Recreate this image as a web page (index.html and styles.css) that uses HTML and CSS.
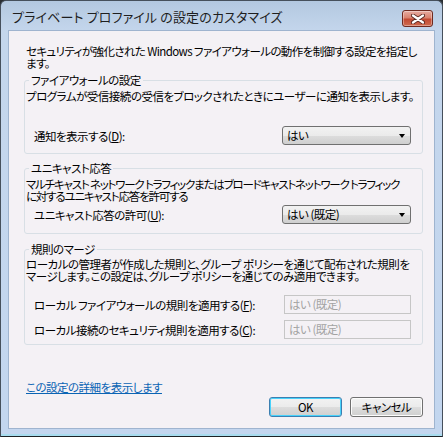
FILE: index.html
```html
<!DOCTYPE html>
<html lang="ja">
<head>
    <meta charset="UTF-8">
    <title>プライベート プロファイル の設定のカスタマイズ</title>
    <link rel="stylesheet" href="styles.css">
</head>
<body>

    <div class="window">
        <!-- Title bar -->
        <div class="titlebar">
            <span class="title">プライベート プロファイル の設定のカスタマイズ</span>
            <button class="close-btn" type="button" aria-label="閉じる">
                <svg width="14" height="10" viewBox="0 0 14 10">
                    <path d="M2 1.5 L12 8.5 M12 1.5 L2 8.5" stroke="#5a2a24" stroke-width="4" stroke-linecap="round"/>
                    <path d="M2 1.5 L12 8.5 M12 1.5 L2 8.5" stroke="#fff" stroke-width="2.2" stroke-linecap="round"/>
                </svg>
            </button>
        </div>

        <div class="client">
            <p class="intro">セキュリティが強化された Windows ファイアウォールの動作を制御する設定を指定し<br>ます。</p>

            <!-- Firewall settings -->
            <fieldset class="group group-firewall">
                <legend>ファイアウォールの設定</legend>
                <p class="desc">プログラムが受信接続の受信をブロックされたときにユーザーに通知を表示します。</p>
                <div class="row">
                    <label>通知を表示する(<u>D</u>):</label>
                    <div class="combo">はい<span class="arrow"></span></div>
                </div>
            </fieldset>

            <!-- Unicast response -->
            <fieldset class="group group-unicast">
                <legend>ユニキャスト応答</legend>
                <p class="desc">マルチキャスト ネットワーク トラフィックまたはブロードキャストネットワーク トラフィック<br>に対するユニキャスト応答を許可する</p>
                <div class="row">
                    <label>ユニキャスト応答の許可(<u>U</u>):</label>
                    <div class="combo">はい (既定)<span class="arrow"></span></div>
                </div>
            </fieldset>

            <!-- Rule merging -->
            <fieldset class="group group-merge">
                <legend>規則のマージ</legend>
                <p class="desc">ローカルの管理者が作成した規則と、グループ ポリシーを通じて配布された規則を<br>マージします。この設定は、グループ ポリシーを通じてのみ適用できます。</p>
                <div class="row row-first">
                    <label>ローカル ファイアウォールの規則を適用する(<u>F</u>):</label>
                    <div class="textbox disabled">はい (既定)</div>
                </div>
                <div class="row">
                    <label>ローカル接続のセキュリティ規則を適用する(<u>C</u>):</label>
                    <div class="textbox disabled">はい (既定)</div>
                </div>
            </fieldset>

            <a class="more-link" href="#">この設定の詳細を表示します</a>

            <div class="buttons">
                <button class="btn btn-default" type="button">OK</button>
                <button class="btn" type="button">キャンセル</button>
            </div>
        </div>
    </div>

</body>
</html>
```

FILE: styles.css
```css
body {
    margin: 0;
    background-color: #2a2e33;
    font-family: "Noto Sans CJK JP", "Noto Sans", sans-serif;
    font-size: 11.5px;
    letter-spacing: -0.5px;
    font-feature-settings: "palt" 1;
    color: #000;
}

.window {
    width: 443px;
    height: 437px;
    box-sizing: border-box;
    border: 1px solid #46505c;
    border-bottom-color: #1d2226;
    border-radius: 6px 6px 0 0;
    background: linear-gradient(to bottom, #b3c8e0 0px, #c4d6ec 30px, #c3d6ef 100%);
    padding: 0 7px 6px 7px;
    box-shadow: inset 0 -2px 0 #a8dcef;
}

/* title bar */

.titlebar {
    height: 29px;
    display: flex;
    align-items: flex-start;
    justify-content: space-between;
    padding: 0 2px 0 4px;
}

.title {
    font-size: 13px;
    letter-spacing: 0.15px;
    line-height: 16px;
    color: #1e1e1e;
    margin-top: 8px;
    white-space: nowrap;
}

.close-btn {
    width: 31px;
    height: 17px;
    margin-top: 9px;
    padding: 0;
    border: 1px solid #6e2a20;
    border-radius: 3px;
    background: linear-gradient(to bottom, #e6aca2 0%, #d9826f 45%, #c24a33 55%, #cf6b4f 100%);
    box-shadow: inset 0 0 0 1px rgba(255, 255, 255, 0.35);
    display: flex;
    align-items: center;
    justify-content: center;
}

/* client area */

.client {
    height: 399px;
    box-sizing: border-box;
    background-color: #f4f1f5;
    border: 1px solid #9fb4cf;
    padding: 14px 11px 0 15px;
    display: flex;
    flex-direction: column;
}

.intro {
    margin: 0 0 5px 2px;
    line-height: 12px;
    letter-spacing: -0.6px;
    white-space: nowrap;
}

.group {
    min-width: 0;
    margin: 0;
    padding: 3px 0 8px 1px;
    border: 1px solid #d8dfe5;
    border-radius: 3px;
}

.group legend {
    padding: 0 2px;
    margin-left: 3px;
    line-height: 13px;
}

.desc {
    margin: 0;
    line-height: 12px;
    white-space: nowrap;
}

.row {
    display: flex;
    align-items: center;
    justify-content: space-between;
    padding: 0 11px 0 8px;
    white-space: nowrap;
}

.group-firewall .row {
    margin-top: 24px;
}

.group-unicast {
    margin-top: 8px;
    padding-bottom: 9px;
}

.group-unicast .desc {
    letter-spacing: -1.2px;
}

.group-unicast .row {
    margin-top: 3px;
}

.group-merge {
    margin-top: 9px;
    padding-top: 2px;
    padding-bottom: 5px;
}

.group-merge .row {
    margin-top: 6px;
}

.group-merge .row-first {
    margin-top: 13px;
}

.combo {
    position: relative;
    width: 123px;
    height: 17px;
    line-height: 17px;
    padding-left: 4px;
    border: 1px solid #707070;
    border-radius: 3px;
    background: linear-gradient(to bottom, #f2f2f2 0%, #ebebeb 50%, #dddddd 51%, #cfcfcf 100%);
}

.combo .arrow {
    position: absolute;
    right: 5px;
    top: 7px;
    border-left: 3.5px solid transparent;
    border-right: 3.5px solid transparent;
    border-top: 4px solid #000;
}

.textbox {
    width: 121px;
    height: 17px;
    line-height: 17px;
    padding-left: 4px;
    border: 1px solid #c6c6c6;
    background-color: #f4f1f5;
}

.textbox.disabled {
    color: #a3a3a3;
}

/* footer */

.more-link {
    align-self: flex-start;
    margin: 36px 0 0 2px;
    line-height: 13px;
    color: #0a64b4;
    text-decoration: underline;
}

.buttons {
    display: flex;
    justify-content: flex-end;
    gap: 8px;
    margin-top: 3px;
}

.btn {
    width: 73px;
    height: 20px;
    padding: 0;
    font-family: inherit;
    font-size: 11.5px;
    letter-spacing: -0.5px;
    font-feature-settings: "palt" 1;
    border: 1px solid #707070;
    border-radius: 3px;
    background: linear-gradient(to bottom, #f2f2f2 0%, #ebebeb 50%, #dddddd 51%, #cfcfcf 100%);
    box-shadow: inset 0 0 0 1px #fcfcfc;
}

.btn-default {
    border-color: #3c7fb1;
    box-shadow: inset 0 0 0 1px #48d2fb;
}
```
